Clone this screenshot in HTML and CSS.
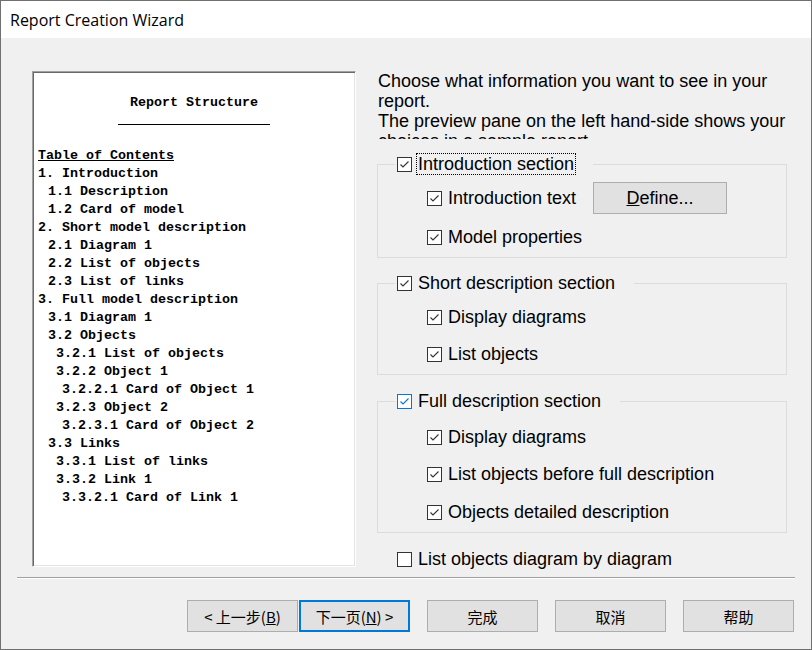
FILE: index.html
```html
<!DOCTYPE html>
<html>
<head>
<meta charset="utf-8">
<title>Report Creation Wizard</title>
<link rel="stylesheet" href="styles.css">
</head>
<body>
<div class="window">
  <div class="titlebar">Report Creation Wizard</div>
  <div class="content">
    <div class="main">
      <div class="preview">
        <div class="pv-title">Report Structure</div>
        <div class="pv-rule"></div>
        <div class="pv-line toc">Table of Contents</div>
        <div class="pv-line">1. Introduction</div>
        <div class="pv-line l1">1.1 Description</div>
        <div class="pv-line l1">1.2 Card of model</div>
        <div class="pv-line">2. Short model description</div>
        <div class="pv-line l1">2.1 Diagram 1</div>
        <div class="pv-line l1">2.2 List of objects</div>
        <div class="pv-line l1">2.3 List of links</div>
        <div class="pv-line">3. Full model description</div>
        <div class="pv-line l1">3.1 Diagram 1</div>
        <div class="pv-line l1">3.2 Objects</div>
        <div class="pv-line l2">3.2.1 List of objects</div>
        <div class="pv-line l2">3.2.2 Object 1</div>
        <div class="pv-line l3">3.2.2.1 Card of Object 1</div>
        <div class="pv-line l2">3.2.3 Object 2</div>
        <div class="pv-line l3">3.2.3.1 Card of Object 2</div>
        <div class="pv-line l1">3.3 Links</div>
        <div class="pv-line l2">3.3.1 List of links</div>
        <div class="pv-line l2">3.3.2 Link 1</div>
        <div class="pv-line l3">3.3.2.1 Card of Link 1</div>
      </div>
      <div class="options">
        <div class="intro">Choose what information you want to see in your<br>report.<br>The preview pane on the left hand-side shows your<br>choices in a sample report.</div>

        <fieldset class="group g1">
          <legend class="glegend">
            <span class="cb"><svg viewBox="0 0 13 13" width="13" height="13"><polyline points="2.5,6.5 5,9 10.5,3.5" fill="none" stroke="#333" stroke-width="1.1"/></svg></span>
            <span class="lbl focus">Introduction section</span>
          </legend>
          <div class="row r1">
            <span class="cb"><svg viewBox="0 0 13 13" width="13" height="13"><polyline points="2.5,6.5 5,9 10.5,3.5" fill="none" stroke="#333" stroke-width="1.1"/></svg></span>
            <span class="txt fixed">Introduction text</span>
            <button class="btn define"><u>D</u>efine...</button>
          </div>
          <div class="row r2">
            <span class="cb"><svg viewBox="0 0 13 13" width="13" height="13"><polyline points="2.5,6.5 5,9 10.5,3.5" fill="none" stroke="#333" stroke-width="1.1"/></svg></span>
            <span class="txt">Model properties</span>
          </div>
        </fieldset>

        <fieldset class="group g2">
          <legend class="glegend">
            <span class="cb"><svg viewBox="0 0 13 13" width="13" height="13"><polyline points="2.5,6.5 5,9 10.5,3.5" fill="none" stroke="#333" stroke-width="1.1"/></svg></span>
            <span class="lbl">Short description section</span>
          </legend>
          <div class="row r1">
            <span class="cb"><svg viewBox="0 0 13 13" width="13" height="13"><polyline points="2.5,6.5 5,9 10.5,3.5" fill="none" stroke="#333" stroke-width="1.1"/></svg></span>
            <span class="txt">Display diagrams</span>
          </div>
          <div class="row r2">
            <span class="cb"><svg viewBox="0 0 13 13" width="13" height="13"><polyline points="2.5,6.5 5,9 10.5,3.5" fill="none" stroke="#333" stroke-width="1.1"/></svg></span>
            <span class="txt">List objects</span>
          </div>
        </fieldset>

        <fieldset class="group g3">
          <legend class="glegend">
            <span class="cb hover"><svg viewBox="0 0 13 13" width="13" height="13"><polyline points="2.5,6.5 5,9 10.5,3.5" fill="none" stroke="#0078d7" stroke-width="1.1"/></svg></span>
            <span class="lbl">Full description section</span>
          </legend>
          <div class="row r1">
            <span class="cb"><svg viewBox="0 0 13 13" width="13" height="13"><polyline points="2.5,6.5 5,9 10.5,3.5" fill="none" stroke="#333" stroke-width="1.1"/></svg></span>
            <span class="txt">Display diagrams</span>
          </div>
          <div class="row r2">
            <span class="cb"><svg viewBox="0 0 13 13" width="13" height="13"><polyline points="2.5,6.5 5,9 10.5,3.5" fill="none" stroke="#333" stroke-width="1.1"/></svg></span>
            <span class="txt">List objects before full description</span>
          </div>
          <div class="row r3">
            <span class="cb"><svg viewBox="0 0 13 13" width="13" height="13"><polyline points="2.5,6.5 5,9 10.5,3.5" fill="none" stroke="#333" stroke-width="1.1"/></svg></span>
            <span class="txt">Objects detailed description</span>
          </div>
        </fieldset>

        <div class="standalone">
          <span class="cb"></span>
          <span class="lbl">List objects diagram by diagram</span>
        </div>
      </div>
    </div>
    <div class="separator"></div>
    <div class="buttons">
      <button class="btn nav">&lt; 上一步(<u>B</u>)</button>
      <button class="btn nav default">下一页(<u>N</u>) &gt;</button>
      <button class="btn nav gapped">完成</button>
      <button class="btn nav gapped">取消</button>
      <button class="btn nav gapped">帮助</button>
    </div>
  </div>
</div>
</body>
</html>
```

FILE: styles.css
```css
* { box-sizing: border-box; }
html, body { margin: 0; padding: 0; background: #f0f0f0; }

.window {
  width: 812px;
  height: 650px;
  border: 1px solid #707070;
  display: flex;
  flex-direction: column;
  background: #f0f0f0;
  overflow: hidden;
}

.titlebar {
  height: 37px;
  flex: none;
  background: #ffffff;
  padding: 2px 0 0 9px;
  line-height: 35px;
  font-family: "Open Sans", "Noto Sans", sans-serif;
  font-size: 16px;
  color: #000;
}

.content {
  flex: 1;
  display: flex;
  flex-direction: column;
}

.main {
  display: flex;
  align-items: flex-start;
  padding: 33px 0 0 31px;
  height: 532px;
}

/* preview pane */
.preview {
  width: 324px;
  height: 496px;
  flex: none;
  background: #ffffff;
  border: 1px solid;
  border-color: #a0a0a0 #ffffff #ffffff #a0a0a0;
  box-shadow: inset 1px 1px 0 #696969, inset -1px -1px 0 #e3e3e3;
  padding: 22px 0 0 5px;
  font-family: "Liberation Mono", "DejaVu Sans Mono", monospace;
  font-weight: bold;
  font-size: 13.33px;
  color: #000;
}
.pv-title {
  line-height: 18px;
  height: 18px;
  text-align: center;
  margin-left: -5px;
  white-space: pre;
}
.pv-rule {
  width: 152px;
  height: 1px;
  background: #000;
  margin: 12px 0 0 80px;
}
.pv-line {
  line-height: 18px;
  height: 18px;
  white-space: pre;
}
.pv-line.toc {
  margin-top: 22px;
  text-decoration: underline;
}
.pv-line.l1 { padding-left: 10px; }
.pv-line.l2 { padding-left: 18px; }
.pv-line.l3 { padding-left: 24px; }

/* options column */
.options {
  width: 410px;
  margin-left: 21px;
  flex: none;
  font-family: "Liberation Sans", Arial, sans-serif;
  font-size: 18px;
  color: #000;
}
.intro {
  height: 68px;
  overflow: hidden;
  line-height: 20px;
  padding-left: 1px;
  white-space: nowrap;
}

.group {
  margin: 0;
  padding: 0 0 4px 0;
  border: 1px solid #dcdcdc;
  min-width: 0;
}
.g1 { margin-top: 14px; }
.g2 { margin-top: 14px; }
.g3 { margin-top: 15px; }

.glegend {
  margin-left: 17px;
  padding: 0 17px 0 2px;
  height: 22px;
  display: flex;
  align-items: center;
}
.lbl {
  margin-left: 4px;
  padding: 0 1px;
  border: 1px dotted transparent;
  height: 22px;
  line-height: 20px;
  white-space: nowrap;
}
.lbl.focus { border-color: #000; }

.cb {
  width: 15px;
  height: 15px;
  flex: none;
  border: 1px solid #333333;
  background: #ffffff;
  display: inline-flex;
  align-items: center;
  justify-content: center;
}
.cb svg { display: block; }
.cb.hover { border-color: #0078d7; }

.row {
  display: flex;
  align-items: center;
  height: 32px;
  padding-left: 49px;
  white-space: nowrap;
}
.txt { margin-left: 6px; }
.txt.fixed { width: 145px; flex: none; }

.g1 .r1 { margin-top: 7px; }
.g1 .r2 { margin-top: 7px; }
.g2 .r1 { margin-top: 7px; }
.g2 .r2 { margin-top: 5px; }
.g3 .r1 { margin-top: 9px; }
.g3 .r2 { margin-top: 5px; }
.g3 .r3 { margin-top: 6px; }

.standalone {
  display: flex;
  align-items: center;
  height: 22px;
  margin-top: 15px;
  padding-left: 20px;
  white-space: nowrap;
}
.standalone .lbl { margin-left: 4px; }

.btn {
  background: #e1e1e1;
  border: 1px solid #adadad;
  color: #000;
  padding: 0;
  margin: 0;
  height: 32px;
}
.define {
  width: 134px;
  font-family: "Liberation Sans", Arial, sans-serif;
  font-size: 18px;
}

.separator {
  margin: 7px 16px 0 16px;
  height: 2px;
  border-top: 1px solid #a0a0a0;
  border-bottom: 1px solid #ffffff;
}

.buttons {
  display: flex;
  justify-content: flex-end;
  margin-top: 21px;
  padding-right: 17px;
}
.nav {
  width: 111px;
  font-family: "Noto Sans CJK SC", "Noto Sans", sans-serif;
  font-size: 15px;
  margin-left: 1px;
}
.nav.default {
  border: 2px solid #0078d7;
}
.nav.gapped { margin-left: 17px; }
```
